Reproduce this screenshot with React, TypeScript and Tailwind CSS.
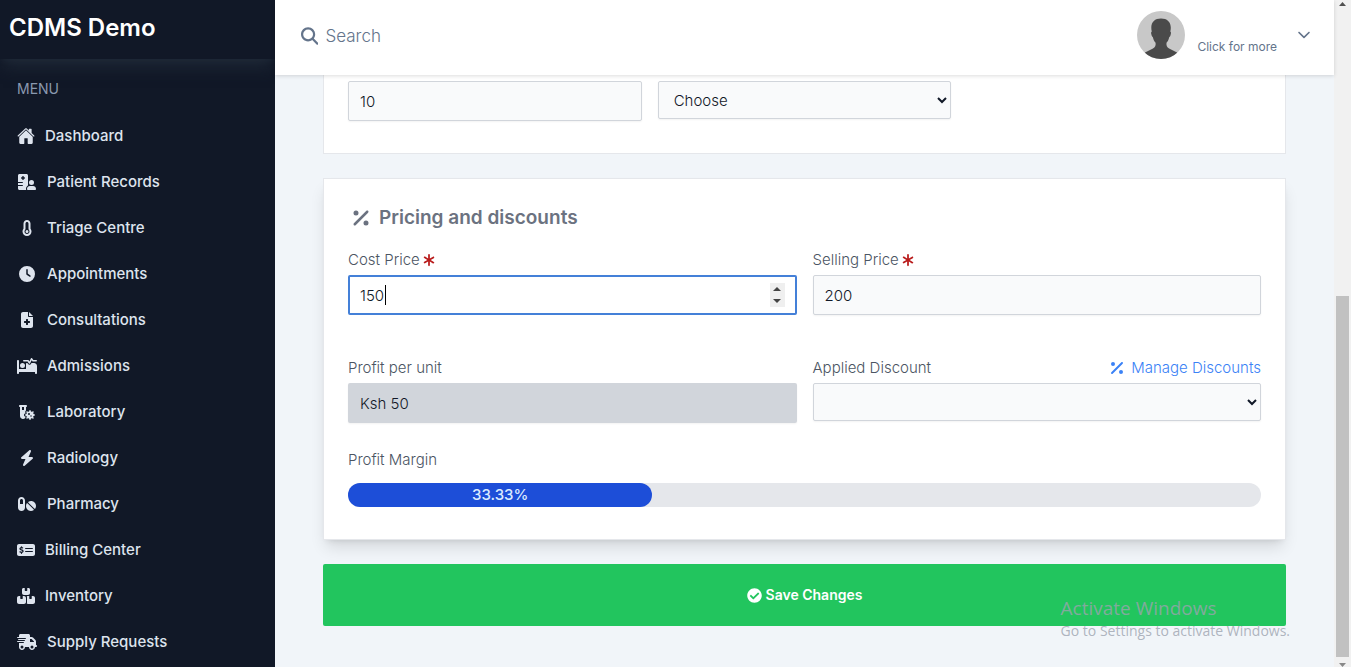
import type { ReactNode } from "react";
import type { IconType } from "react-icons";
import {
  FaAsterisk,
  FaBedPulse,
  FaBolt,
  FaBoxesStacked,
  FaClock,
  FaFileMedical,
  FaHospitalUser,
  FaMagnifyingGlass,
  FaMoneyCheckDollar,
  FaPercent,
  FaPills,
  FaTemperatureEmpty,
  FaTruckFast,
  FaVialVirus,
} from "react-icons/fa6";
import { FaCheckCircle } from "react-icons/fa";
import { IoHome } from "react-icons/io5";

type MenuItem = {
  label: string;
  icon: IconType;
  iconSize: string;
  compact?: boolean;
};

const menu: MenuItem[] = [
  { label: "Dashboard", icon: IoHome, iconSize: "size-[18px]", compact: true },
  { label: "Patient Records", icon: FaHospitalUser, iconSize: "size-[18px]" },
  { label: "Triage Centre", icon: FaTemperatureEmpty, iconSize: "size-4" },
  { label: "Appointments", icon: FaClock, iconSize: "size-4" },
  { label: "Consultations", icon: FaFileMedical, iconSize: "size-4" },
  { label: "Admissions", icon: FaBedPulse, iconSize: "size-5" },
  { label: "Laboratory", icon: FaVialVirus, iconSize: "size-4" },
  { label: "Radiology", icon: FaBolt, iconSize: "size-4" },
  { label: "Pharmacy", icon: FaPills, iconSize: "size-[18px]" },
  {
    label: "Billing Center",
    icon: FaMoneyCheckDollar,
    iconSize: "size-[18px]",
    compact: true,
  },
  {
    label: "Inventory",
    icon: FaBoxesStacked,
    iconSize: "size-[18px]",
    compact: true,
  },
  { label: "Supply Requests", icon: FaTruckFast, iconSize: "size-5" },
];

const field =
  "block w-full rounded-xs border border-[#d1d5db] bg-[#f9fafb] px-[11px] text-[15px] font-light text-[#111827] shadow-xs outline-none";

function Sidebar() {
  return (
    <aside className="flex w-[275px] shrink-0 flex-col overflow-hidden bg-[#111827]">
      <div className="h-[59px] shrink-0 px-[9px] pt-2 shadow-[0_10px_15px_-3px_#1f2937,0_4px_6px_-4px_#1f2937]">
        <a href="#" className="text-2xl leading-10 font-semibold text-white">
          CDMS Demo
        </a>
      </div>
      <nav className="pt-5" aria-label="Main">
        <h3 className="px-[17px] text-sm leading-5 text-[#8a99af]">MENU</h3>
        <ul className="mt-[14px]">
          {menu.map(({ label, icon: Icon, iconSize, compact }) => (
            <li key={label}>
              <a
                href="#"
                className="flex h-[46px] items-center gap-[10px] px-[17px] text-[15px] font-medium text-[#dee4ee]"
              >
                <span
                  className={
                    compact
                      ? "flex w-[18px] justify-center"
                      : "flex w-5 justify-center"
                  }
                >
                  <Icon className={iconSize} />
                </span>
                {label}
              </a>
            </li>
          ))}
        </ul>
      </nav>
    </aside>
  );
}

function Avatar() {
  return (
    <svg viewBox="0 0 48 48" className="size-12 rounded-full" aria-hidden="true">
      <rect width="48" height="48" fill="#c8c8c8" />
      <path
        fill="#4a4a4a"
        d="M24 7.500c-6 0-9.700 3.300-9.700 9.300 0 1.500.2 2.700.5 3.700-.9.300-.8 1.700-.4 3.100.3 1.200.8 2.500 1.500 2.700.5 2.400 1.500 4.200 2.700 5.500.3 2.800-.5 4.400-2.600 5.700L8 41.500V48h32v-6.500l-7.900-4c-2.200-1.300-2.900-2.900-2.600-5.700 1.200-1.300 2.200-3.100 2.700-5.500.7-.2 1.200-1.500 1.500-2.700.4-1.400.5-2.800-.4-3.100.3-1 .5-2.200.5-3.700 0-6-3.800-9.300-9.800-9.300z"
      />
    </svg>
  );
}

function Header() {
  return (
    <header className="relative z-10 flex h-[75px] shrink-0 items-start justify-between bg-white pr-6 pl-[26px] shadow-[0_1px_4px_rgba(0,0,0,0.14)]">
      <label className="flex flex-1 items-center gap-[7px] pt-[22px] text-[#64748b]">
        <FaMagnifyingGlass className="size-[18px]" />
        <input
          type="text"
          placeholder="Search"
          aria-label="Search"
          className="h-7 w-full text-[17px] font-light outline-none placeholder:text-[#64748b]"
        />
      </label>
      <button type="button" className="flex items-center pt-[11px] text-[#64748b]">
        <Avatar />
        <span className="mt-6 ml-3 text-xs">Click for more</span>
        <svg viewBox="0 0 12 8" className="ml-[21px] h-2 w-3" aria-hidden="true">
          <path
            fill="currentColor"
            d="M.41.91c.33-.33.85-.33 1.180 0L6 5.320 10.410.910c.33-.33.85-.33 1.180 0 .33.330.33.850 0 1.180l-5 5c-.33.330-.85.330-1.180 0l-5-5c-.33-.33-.33-.85 0-1.180z"
          />
        </svg>
      </button>
    </header>
  );
}

function FieldLabel({
  id,
  required,
  children,
}: {
  id: string;
  required?: boolean;
  children: ReactNode;
}) {
  return (
    <label
      htmlFor={id}
      className="flex h-8 items-center gap-[2px] pt-[2px] text-[15px] font-light text-[#4b5563]"
    >
      {children}
      {required && <FaAsterisk className="size-[14px] text-[#b91c1c]" />}
    </label>
  );
}

function StockCard() {
  return (
    <section className="grid grid-cols-3 items-start gap-4 border border-t-0 border-[#e5e7eb] bg-white px-6 pt-[6px] pb-8">
      <input
        type="text"
        aria-label="Quantity"
        defaultValue="10"
        className={`${field} h-10`}
      />
      <select aria-label="Unit" className={`${field} h-[38px]`}>
        <option>Choose</option>
      </select>
    </section>
  );
}

function PricingCard() {
  return (
    <section className="border border-[#e5e7eb] bg-white px-6 pt-6 pb-8 shadow-[0_10px_15px_-3px_rgba(0,0,0,0.12),0_4px_6px_-4px_rgba(0,0,0,0.12)]">
      <h2 className="flex h-7 items-center gap-2 pt-[2px] pl-[3px] text-[19px] font-semibold text-[#6b7280]">
        <FaPercent className="size-5" />
        Pricing and discounts
      </h2>
      <div className="mt-3 grid grid-cols-2 gap-x-4 gap-y-9">
        <div>
          <FieldLabel id="cost" required>
            Cost Price
          </FieldLabel>
          <div className="relative">
            <input
              id="cost"
              type="text"
              inputMode="numeric"
              defaultValue="150"
              className="block h-10 w-full rounded-xs border-2 border-[#4480d8] bg-white px-[10px] text-[15px] font-light text-[#111827] outline-none"
            />
            <span className="absolute top-[10px] left-[37px] h-5 w-px bg-black" />
            <div className="absolute top-2 right-3 flex h-6 w-[15px] flex-col items-center justify-around bg-[#efefef]">
              <button type="button" aria-label="Increase" className="flex">
                <svg viewBox="0 0 8 4" className="h-1 w-2" aria-hidden="true">
                  <path d="M0 4 4 0l4 4z" fill="#444" />
                </svg>
              </button>
              <button type="button" aria-label="Decrease" className="flex">
                <svg viewBox="0 0 8 4" className="h-1 w-2" aria-hidden="true">
                  <path d="M0 0l4 4 4-4z" fill="#444" />
                </svg>
              </button>
            </div>
          </div>
        </div>
        <div>
          <FieldLabel id="selling" required>
            Selling Price
          </FieldLabel>
          <input
            id="selling"
            type="text"
            inputMode="numeric"
            defaultValue="200"
            className={`${field} h-10`}
          />
        </div>
        <div>
          <FieldLabel id="profit">Profit per unit</FieldLabel>
          <input
            id="profit"
            type="text"
            readOnly
            value="Ksh 50"
            className="block h-10 w-full rounded-xs bg-[#d1d5db] px-3 text-[15px] font-light text-[#111827] shadow-xs outline-none"
          />
        </div>
        <div>
          <div className="flex justify-between">
            <FieldLabel id="discount">Applied Discount</FieldLabel>
            <a
              href="#"
              className="flex items-center gap-[6px] pt-[2px] text-[15px] font-light text-[#3b82f6]"
            >
              <FaPercent className="size-4" />
              Manage Discounts
            </a>
          </div>
          <select id="discount" className={`${field} h-[38px]`}>
            <option />
          </select>
        </div>
      </div>
      <p className="mt-6 pt-px text-[15px] leading-6 font-light text-[#4b5563]">
        Profit Margin
      </p>
      <div className="mt-[11px] h-6 rounded-full bg-[#e5e7eb]">
        <div className="flex h-6 w-1/3 items-center justify-center rounded-full bg-[#1d4ed8] text-[15px] font-medium text-[#dbeafe]">
          33.33%
        </div>
      </div>
    </section>
  );
}

function ScrollRail() {
  return (
    <div
      className="flex w-[17px] shrink-0 flex-col items-center justify-between bg-[#f1f1f1]"
      aria-hidden="true"
    >
      <svg viewBox="0 0 17 8" className="h-2 w-[17px]">
        <path d="M5 6l3.500-4L12 6z" fill="#505050" />
      </svg>
      <div className="flex w-full flex-col items-center">
        <div className="h-[361px] w-[13px] bg-[#c1c1c1]" />
        <svg viewBox="0 0 17 10" className="h-[10px] w-[17px]">
          <path d="M5 6l3.500 4L12 6z" fill="#888" />
        </svg>
      </div>
    </div>
  );
}

export default function App() {
  return (
    <div className="relative flex h-screen overflow-hidden bg-[#f1f5f9] font-['Inter',sans-serif]">
      <Sidebar />
      <div className="flex min-w-0 flex-1 flex-col">
        <Header />
        <main className="flex flex-1 flex-col gap-6 overflow-hidden px-12">
          <StockCard />
          <PricingCard />
          <button
            type="button"
            className="flex h-[62px] shrink-0 items-center justify-center gap-1 rounded-xs bg-[#22c55e] text-sm font-semibold text-white"
          >
            <FaCheckCircle className="size-[15px]" />
            Save Changes
          </button>
        </main>
      </div>
      <ScrollRail />
      <div className="pointer-events-none absolute right-[61px] bottom-[26px] z-20 font-['Open_Sans',sans-serif] text-[#9ca3af]/80">
        <p className="text-[19px] leading-[26px]">Activate Windows</p>
        <p className="text-sm leading-5">Go to Settings to activate Windows.</p>
      </div>
    </div>
  );
}
